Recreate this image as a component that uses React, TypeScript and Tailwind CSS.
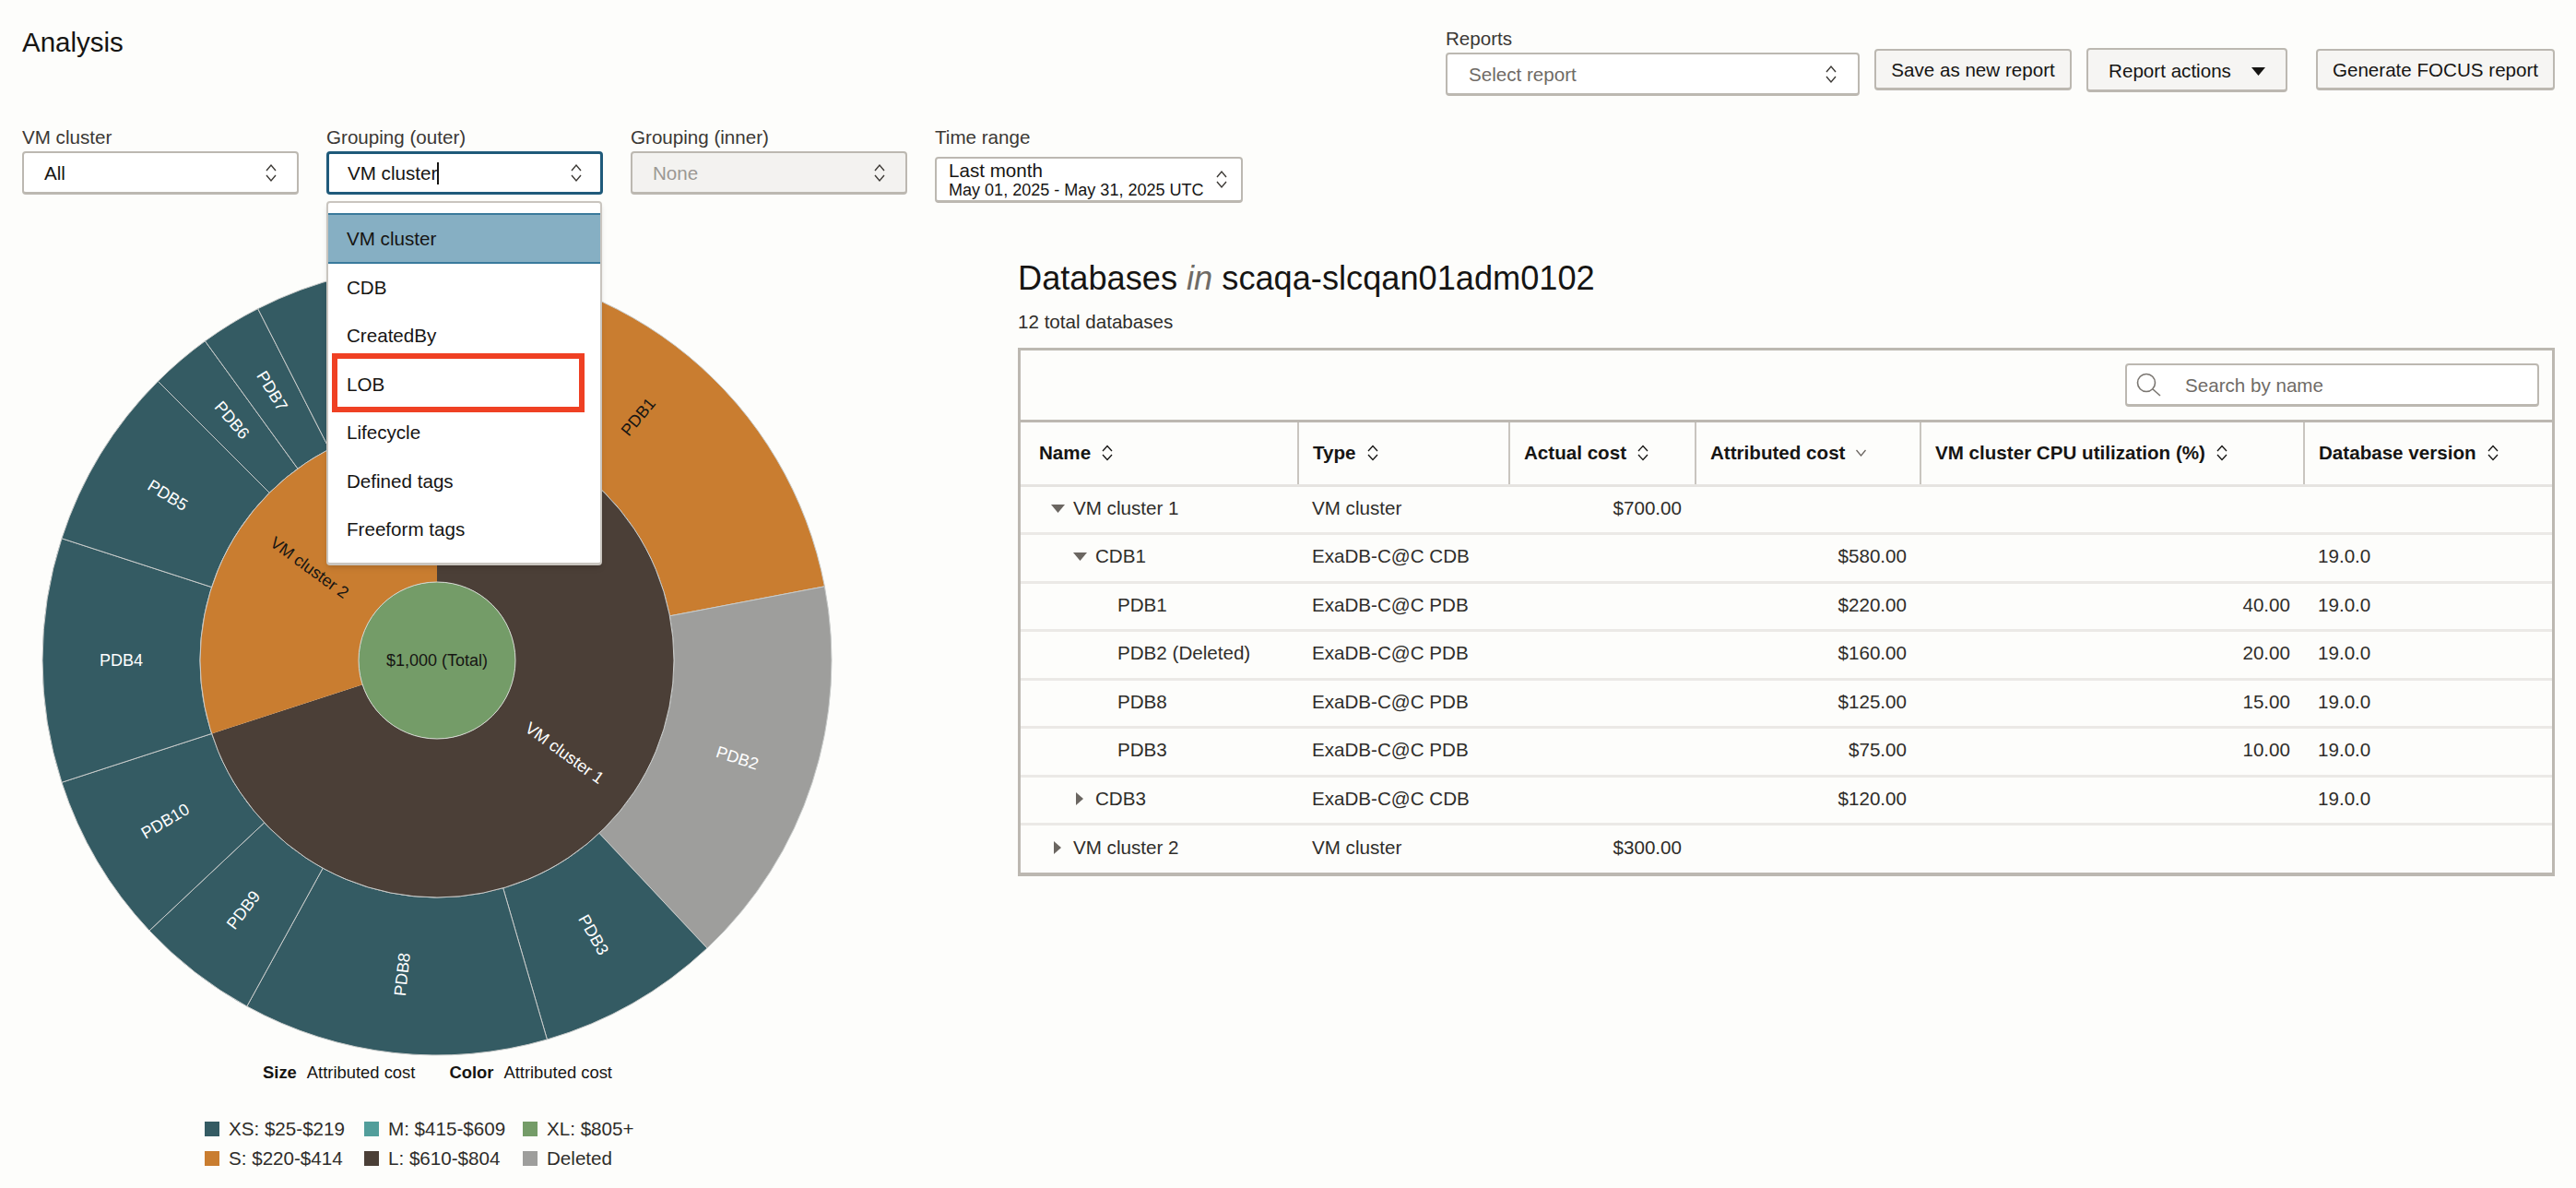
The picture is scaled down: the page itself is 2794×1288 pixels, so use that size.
import React from 'react';

const TEAL = '#345b63';
const ORANGE = '#c97d30';
const BROWN = '#4b3f37';
const GRAY = '#9e9e9c';
const GREEN = '#749c68';

// Sunburst geometry, all in svg px
const CX = 450;
const CY = 436;
const R_OUTER = 428;
const R_RING = 257;
const R_CENTER = 85;

type Slice = { label: string; cost: number; fill: string; text: string };

const outer: Slice[] = [
  { label: 'PDB1', cost: 220, fill: ORANGE, text: '#161513' },
  { label: 'PDB2', cost: 160, fill: GRAY, text: '#ffffff' },
  { label: 'PDB3', cost: 75, fill: TEAL, text: '#ffffff' },
  { label: 'PDB8', cost: 125, fill: TEAL, text: '#ffffff' },
  { label: 'PDB9', cost: 50, fill: TEAL, text: '#ffffff' },
  { label: 'PDB10', cost: 70, fill: TEAL, text: '#ffffff' },
  { label: 'PDB4', cost: 100, fill: TEAL, text: '#ffffff' },
  { label: 'PDB5', cost: 75, fill: TEAL, text: '#ffffff' },
  { label: 'PDB6', cost: 25, fill: TEAL, text: '#ffffff' },
  { label: 'PDB7', cost: 25, fill: TEAL, text: '#ffffff' },
  { label: '', cost: 75, fill: TEAL, text: '#ffffff' },
];

const ring: Slice[] = [
  { label: 'VM cluster 1', cost: 700, fill: BROWN, text: '#ffffff' },
  { label: 'VM cluster 2', cost: 300, fill: ORANGE, text: '#161513' },
];

const point = (r: number, deg: number) => {
  const a = (deg * Math.PI) / 180;
  return [CX + r * Math.sin(a), CY - r * Math.cos(a)];
};

const wedge = (r0: number, r1: number, from: number, to: number) => {
  const [ax, ay] = point(r1, from);
  const [bx, by] = point(r1, to);
  const [cx, cy] = point(r0, to);
  const [dx, dy] = point(r0, from);
  const big = to - from > 180 ? 1 : 0;
  return `M${ax} ${ay}A${r1} ${r1} 0 ${big} 1 ${bx} ${by}L${cx} ${cy}A${r0} ${r0} 0 ${big} 0 ${dx} ${dy}Z`;
};

function Layer({ slices, r0, r1, stroke }: { slices: Slice[]; r0: number; r1: number; stroke?: string }) {
  let start = 0;
  return (
    <g>
      {slices.map((s, i) => {
        const from = start;
        const to = from + (s.cost / 1000) * 360;
        start = to;
        const mid = (from + to) / 2;
        const [x, y] = point((r0 + r1) / 2, mid);
        const rot = mid > 180 ? mid - 270 : mid - 90;
        return (
          <g key={i}>
            <path d={wedge(r0, r1, from, to)} fill={s.fill} stroke={stroke ?? 'none'} strokeWidth={1} />
            {s.label && (
              <text x={x} y={y} fill={s.text} fontSize={18} textAnchor="middle" dominantBaseline="central" transform={`rotate(${rot} ${x} ${y})`}>
                {s.label}
              </text>
            )}
          </g>
        );
      })}
    </g>
  );
}

function Sunburst() {
  return (
    <svg width={900} height={868} viewBox="0 0 900 868" className="block">
      <Layer slices={outer} r0={R_RING} r1={R_OUTER} stroke="#c9cccb" />
      <Layer slices={ring} r0={R_CENTER} r1={R_RING} />
      <circle cx={CX} cy={CY} r={R_RING} fill="none" stroke="#c9cccb" strokeWidth={1} />
      <circle cx={CX} cy={CY} r={R_CENTER} fill={GREEN} stroke="#d5d8d2" strokeWidth={1} />
      <text x={CX} y={CY} fill="#161513" fontSize={18} textAnchor="middle" dominantBaseline="central">
        $1,000 (Total)
      </text>
    </svg>
  );
}

function UpDown({ className = 'text-[#3d3a36]' }: { className?: string }) {
  return (
    <svg width={12} height={21} viewBox="0 0 12 21" fill="none" stroke="currentColor" strokeWidth={1.4} className={`shrink-0 ${className}`}>
      <path d="M1 8L6 2L11 8" />
      <path d="M1 13L6 19L11 13" />
    </svg>
  );
}

function SortIcon() {
  return (
    <svg width={14} height={18} viewBox="0 0 14 18" fill="none" stroke="#161513" strokeWidth={1.3} className="shrink-0">
      <path d="M2 7L7 1.5L12 7" />
      <path d="M2 11L7 16.5L12 11" />
    </svg>
  );
}

function Field({ label, children, className = '' }: { label: string; children: React.ReactNode; className?: string }) {
  return (
    <div className={`relative flex w-[300px] flex-col ${className}`}>
      <div className="h-[26px] text-[20.6px] leading-[26px] text-[#3b3835]">{label}</div>
      <div className="mt-[2px]">{children}</div>
    </div>
  );
}

const menuItems = ['CDB', 'CreatedBy', 'LOB', 'Lifecycle', 'Defined tags', 'Freeform tags'];

const columns = [
  { name: 'Name', w: 'w-[301px]', pad: 'pl-[20px]' },
  { name: 'Type', w: 'w-[229px]', pad: 'pl-[15px]' },
  { name: 'Actual cost', w: 'w-[202px]', pad: 'pl-[15px]' },
  { name: 'Attributed cost', w: 'w-[244px]', pad: 'pl-[15px]' },
  { name: 'VM cluster CPU utilization (%)', w: 'w-[416px]', pad: 'pl-[15px]' },
  { name: 'Database version', w: 'w-[269px]', pad: 'pl-[15px]' },
];

type Row = { name: string; indent: string; caret?: 'down' | 'right'; type: string; actual?: string; attributed?: string; cpu?: string; version?: string };

const rows: Row[] = [
  { name: 'VM cluster 1', indent: 'pl-[33px]', caret: 'down', type: 'VM cluster', actual: '$700.00' },
  { name: 'CDB1', indent: 'pl-[57px]', caret: 'down', type: 'ExaDB-C@C CDB', attributed: '$580.00', version: '19.0.0' },
  { name: 'PDB1', indent: 'pl-[105px]', type: 'ExaDB-C@C PDB', attributed: '$220.00', cpu: '40.00', version: '19.0.0' },
  { name: 'PDB2 (Deleted)', indent: 'pl-[105px]', type: 'ExaDB-C@C PDB', attributed: '$160.00', cpu: '20.00', version: '19.0.0' },
  { name: 'PDB8', indent: 'pl-[105px]', type: 'ExaDB-C@C PDB', attributed: '$125.00', cpu: '15.00', version: '19.0.0' },
  { name: 'PDB3', indent: 'pl-[105px]', type: 'ExaDB-C@C PDB', attributed: '$75.00', cpu: '10.00', version: '19.0.0' },
  { name: 'CDB3', indent: 'pl-[57px]', caret: 'right', type: 'ExaDB-C@C CDB', attributed: '$120.00', version: '19.0.0' },
  { name: 'VM cluster 2', indent: 'pl-[33px]', caret: 'right', type: 'VM cluster', actual: '$300.00' },
];

function Caret({ dir }: { dir: 'down' | 'right' }) {
  return (
    <span className="flex w-[24px] shrink-0 justify-start">
      {dir === 'down' ? (
        <svg width={15} height={9} viewBox="0 0 15 9" fill="#6b6661"><path d="M0 0H15L7.5 9Z" /></svg>
      ) : (
        <svg width={15} height={14} viewBox="0 0 15 14" fill="#6b6661"><path d="M3 0L11 7L3 14Z" /></svg>
      )}
    </span>
  );
}

const legend = [
  { swatch: 'bg-[#345b63]', label: 'XS: $25-$219' },
  { swatch: 'bg-[#529e9b]', label: 'M: $415-$609' },
  { swatch: 'bg-[#749c68]', label: 'XL: $805+' },
  { swatch: 'bg-[#c97d30]', label: 'S: $220-$414' },
  { swatch: 'bg-[#4b3f37]', label: 'L: $610-$804' },
  { swatch: 'bg-[#9e9e9c]', label: 'Deleted' },
];

export default function App() {
  const fieldBox = 'flex items-center justify-between rounded-[4px] border-2 border-b-[3px] border-[#bcb8b1] bg-white';
  const btn = 'flex items-center justify-center rounded-[4px] border-2 border-b-[3px] border-[#bcb8b1] bg-[#f6f5f3] text-[20.6px] text-[#161513]';

  return (
    <div className="h-[1288px] w-[2794px] overflow-hidden bg-[#fdfdfb] text-[#161513] [font-family:'Liberation_Sans',Arial,sans-serif]">
      {/* Title and report actions */}
      <div className="flex items-start justify-between pl-[24px] pr-[23px] pt-[28px]">
        <h1 className="text-[29.5px] leading-[36px]">Analysis</h1>
        <div className="flex items-start pt-[1px]">
          <div className="w-[449px]">
            <div className="h-[26px] text-[20.6px] leading-[26px] text-[#3b3835]">Reports</div>
            <div className={`mt-[2px] h-[47px] px-[23px] ${fieldBox}`}>
              <span className="pt-[2px] text-[20.6px] text-[#6f6b66]">Select report</span>
              <UpDown />
            </div>
          </div>
          <button className={`ml-[16px] mt-[24px] h-[45px] w-[214px] pt-[2px] ${btn}`}>Save as new report</button>
          <button className={`ml-[16px] mt-[23px] h-[48px] w-[218px] gap-[22px] pt-[3px] ${btn}`}>
            <span>Report actions</span>
            <svg width={15} height={9} viewBox="0 0 15 9" fill="#161513"><path d="M0 0H15L7.5 9Z" /></svg>
          </button>
          <button className={`ml-[31px] mt-[24px] h-[45px] w-[259px] pt-[2px] ${btn}`}>Generate FOCUS report</button>
        </div>
      </div>

      {/* Filters */}
      <div className="mt-[32px] flex items-start gap-[30px] pl-[24px]">
        <Field label="VM cluster">
          <div className={`h-[47px] px-[22px] ${fieldBox}`}>
            <span className="pt-[2px] text-[20.6px]">All</span>
            <UpDown />
          </div>
        </Field>
        <Field label="Grouping (outer)" className="z-10">
          <div className="flex h-[47px] items-center justify-between rounded-[4px] border-[3px] border-[#1f5a7a] bg-white px-[20px]">
            <span className="flex items-center pt-[2px] text-[20.6px]">
              VM cluster
              <span className="h-[24px] w-[2px] bg-[#161513]" />
            </span>
            <UpDown />
          </div>
          {/* Open dropdown, sits over the chart */}
          <div className="absolute left-0 top-[82px] w-[299px] rounded-[4px] border-2 border-b-[3px] border-[#c9c5bf] bg-white pt-[11px] shadow-md">
            <div className="flex h-[55px] items-center border-y-2 border-[#3a7a9c] bg-[#86afc3] pl-[20px] pt-[1px] text-[20.6px]">VM cluster</div>
            {menuItems.map((item) => (
              <div key={item} className="flex h-[52.5px] items-center pl-[20px] text-[20.6px]">
                {item}
              </div>
            ))}
            <div className="h-[9px]" />
            {/* Red annotation box round LOB */}
            <div className="absolute left-[4px] top-[163px] h-[64px] w-[274px] border-[6px] border-[#ef4023]" />
          </div>
        </Field>
        <Field label="Grouping (inner)">
          <div className="flex h-[47px] items-center justify-between rounded-[4px] border-2 border-b-[3px] border-[#bcb8b1] bg-[#f3f2f0] px-[22px]">
            <span className="pt-[2px] text-[20.6px] text-[#9b9894]">None</span>
            <UpDown />
          </div>
        </Field>
        <Field label="Time range" className="!w-[334px]">
          <div className={`mt-[6px] h-[50px] pl-[13px] pr-[15px] ${fieldBox}`}>
            <div className="flex flex-col">
              <span className="text-[20.6px] leading-[22px]">Last month</span>
              <span className="text-[18.05px] leading-[20px]">May 01, 2025 - May 31, 2025 UTC</span>
            </div>
            <UpDown />
          </div>
        </Field>
      </div>

      {/* Chart and table */}
      <div className="mt-[60px] flex items-start pl-[24px]">
        <div className="w-[1080px] shrink-0">
          <Sunburst />
          <div className="mt-[2px] flex h-[26px] items-center pl-[261px] text-[18.4px]">
            <span className="font-bold">Size</span>
            <span className="ml-[11px]">Attributed cost</span>
            <span className="ml-[37px] font-bold">Color</span>
            <span className="ml-[11px]">Attributed cost</span>
          </div>
          <div className="ml-[198px] mt-[32px] grid grid-cols-[173px_172px_auto]">
            {legend.map((l) => (
              <div key={l.label} className="flex h-[32px] items-center gap-[10px] text-[20.6px] text-[#2f2d2a]">
                <span className={`h-[16px] w-[16px] ${l.swatch}`} />
                <span>{l.label}</span>
              </div>
            ))}
          </div>
        </div>

        <div className="w-[1667px] shrink-0">
          <h2 className="text-[36.2px] leading-[44px]">
            Databases <span className="italic text-[#6f6b66]">in</span> scaqa-slcqan01adm0102
          </h2>
          <div className="mt-[12px] text-[20.6px] leading-[26px] text-[#2f2d2a]">12 total databases</div>
          <div className="mt-[15px] border-x-[3px] border-b-[4px] border-t-[3px] border-[#bcb8b1]">
            <div className="flex h-[78px] items-center justify-end border-b-[3px] border-[#bcb8b1] pr-[14px]">
              <div className="flex h-[47px] w-[449px] items-center rounded-[4px] border-2 border-b-[3px] border-[#bcb8b1] bg-white pl-[10px]">
                <svg width={28} height={26} viewBox="0 0 28 26" fill="none" stroke="#7a7671" strokeWidth={1.6}>
                  <circle cx={11} cy={11} r={9.5} />
                  <path d="M18 18L26 25" />
                </svg>
                <span className="ml-[25px] pt-[2px] text-[20.6px] text-[#6f6b66]">Search by name</span>
              </div>
            </div>
            <table className="w-full table-fixed border-collapse text-[20.6px]">
              <thead>
                <tr className="h-[68px] border-b-[3px] border-[#e6e4e1]">
                  {columns.map((c, i) => (
                    <th key={c.name} className={`${c.w} ${c.pad} text-left font-bold ${i < columns.length - 1 ? 'border-r-2 border-[#c9c5bf]' : ''}`}>
                      <span className="flex items-center gap-[11px]">
                        {c.name}
                        {c.name === 'Attributed cost' ? (
                          <svg width={13} height={8} viewBox="0 0 13 8" fill="none" stroke="#6b6661" strokeWidth={1.3}><path d="M1.5 1L6.5 7L11.5 1" /></svg>
                        ) : (
                          <SortIcon />
                        )}
                      </span>
                    </th>
                  ))}
                </tr>
              </thead>
              <tbody className="text-[#2f2d2a]">
                {rows.map((r) => (
                  <tr key={r.name} className="h-[52.5px] border-b-[3px] border-[#ebe9e6] last:border-b-0">
                    <td className="pb-[2px]">
                      <span className={`flex items-center ${r.indent}`}>
                        {r.caret && <Caret dir={r.caret} />}
                        {r.name}
                      </span>
                    </td>
                    <td className="pb-[2px] pl-[15px]">{r.type}</td>
                    <td className="pb-[2px] pr-[15px] text-right">{r.actual}</td>
                    <td className="pb-[2px] pr-[15px] text-right">{r.attributed}</td>
                    <td className="pb-[2px] pr-[15px] text-right">{r.cpu}</td>
                    <td className="pb-[2px] pl-[15px]">{r.version}</td>
                  </tr>
                ))}
              </tbody>
            </table>
          </div>
        </div>
      </div>
    </div>
  );
}
